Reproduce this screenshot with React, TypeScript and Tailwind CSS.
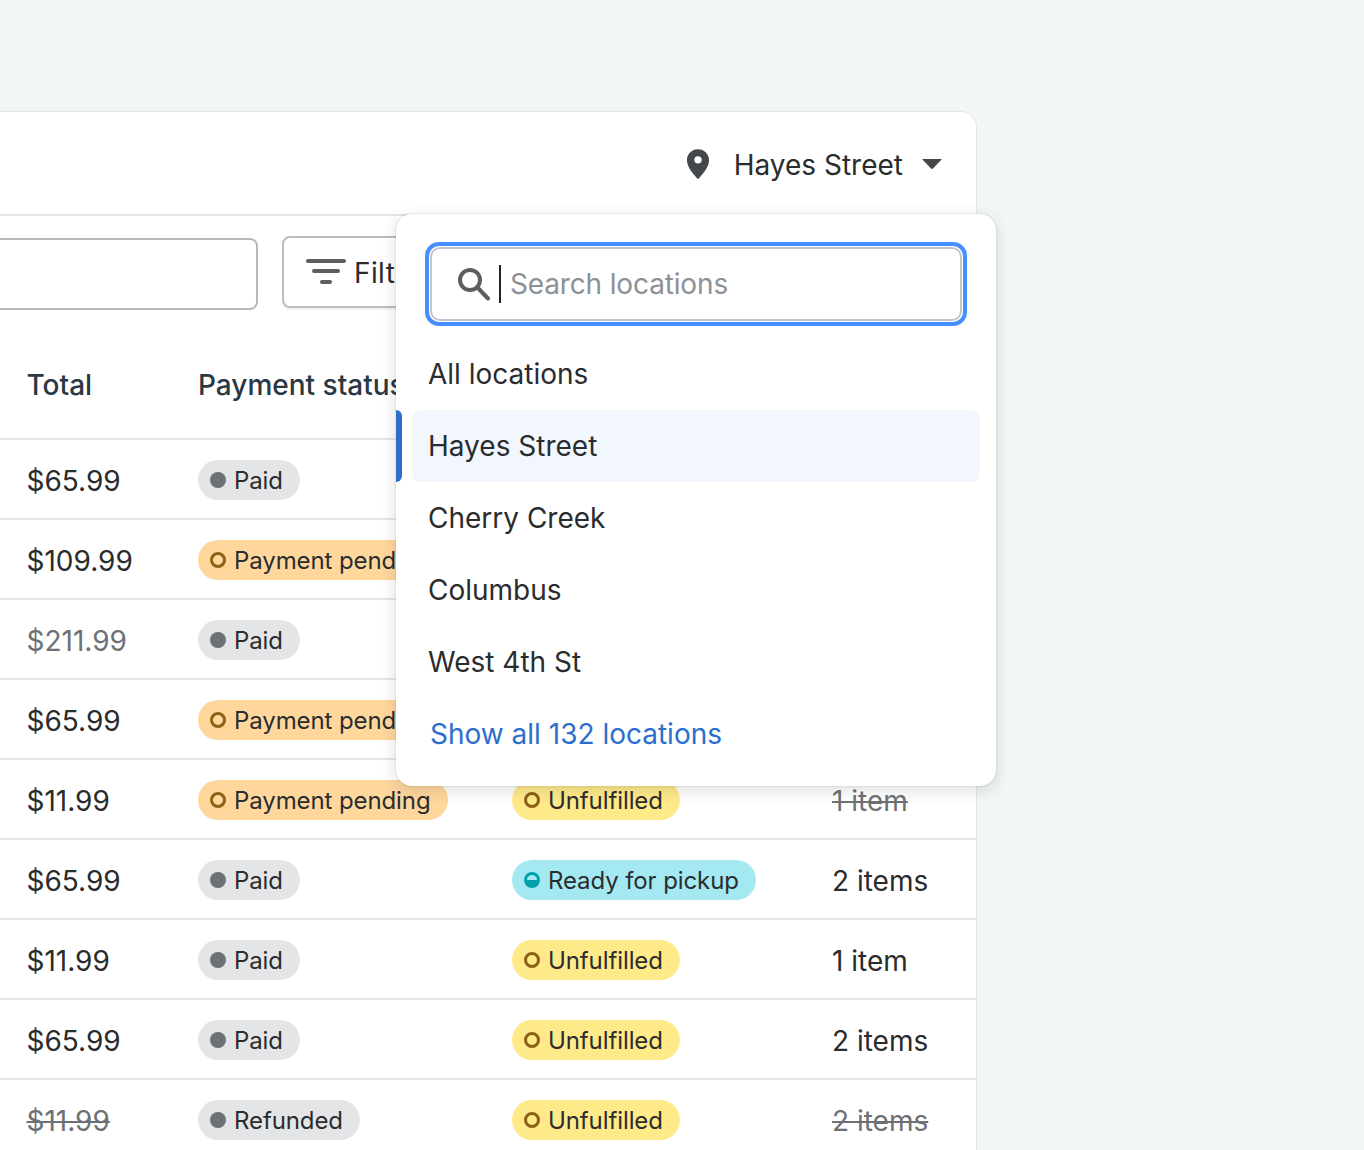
import React from "react";

type Tone = "paid" | "pending" | "unfulfilled" | "ready";

type Row = {
  total: string;
  payment: string;
  paymentTone: Tone;
  fulfillment: string;
  fulfillmentTone: Tone;
  items: string;
  muted?: "total" | "items" | "both";
};

const rows: Row[] = [
  { total: "$65.99", payment: "Paid", paymentTone: "paid", fulfillment: "Unfulfilled", fulfillmentTone: "unfulfilled", items: "2 items" },
  { total: "$109.99", payment: "Payment pending", paymentTone: "pending", fulfillment: "Unfulfilled", fulfillmentTone: "unfulfilled", items: "1 item" },
  { total: "$211.99", payment: "Paid", paymentTone: "paid", fulfillment: "Unfulfilled", fulfillmentTone: "unfulfilled", items: "2 items", muted: "total" },
  { total: "$65.99", payment: "Payment pending", paymentTone: "pending", fulfillment: "Unfulfilled", fulfillmentTone: "unfulfilled", items: "1 item" },
  { total: "$11.99", payment: "Payment pending", paymentTone: "pending", fulfillment: "Unfulfilled", fulfillmentTone: "unfulfilled", items: "1 item", muted: "items" },
  { total: "$65.99", payment: "Paid", paymentTone: "paid", fulfillment: "Ready for pickup", fulfillmentTone: "ready", items: "2 items" },
  { total: "$11.99", payment: "Paid", paymentTone: "paid", fulfillment: "Unfulfilled", fulfillmentTone: "unfulfilled", items: "1 item" },
  { total: "$65.99", payment: "Paid", paymentTone: "paid", fulfillment: "Unfulfilled", fulfillmentTone: "unfulfilled", items: "2 items" },
  { total: "$11.99", payment: "Refunded", paymentTone: "paid", fulfillment: "Unfulfilled", fulfillmentTone: "unfulfilled", items: "2 items", muted: "both" },
];

function Pill({ tone, label }: { tone: Tone; label: string }) {
  const bg =
    tone === "paid"
      ? "bg-[#e4e5e7]"
      : tone === "pending"
      ? "bg-[#ffd79d]"
      : tone === "unfulfilled"
      ? "bg-[#ffea8a]"
      : "bg-[#a4e8f2]";
  return (
    <span className={`${bg} inline-flex h-10 items-center gap-[8px] rounded-full pl-[12px] pr-[17px] text-[24px] tracking-[-0.1px] text-[#2a2c2e]`}>
      {tone === "paid" && <span className="h-4 w-4 rounded-full bg-[#6d7175]" />}
      {(tone === "pending" || tone === "unfulfilled") && (
        <span className="h-4 w-4 rounded-full border-[3px] border-[#8a6116]" />
      )}
      {tone === "ready" && (
        <span className="flex h-4 w-4 justify-center rounded-full bg-[#00a0ac] pt-[3px]">
          <span className="h-[5px] w-[10px] rounded-t-full bg-[#a4e8f2]" />
        </span>
      )}
      <span className="pt-[2px]">{label}</span>
    </span>
  );
}

function Dropdown() {
  const items = ["All locations", "Hayes Street", "Cherry Creek", "Columbus", "West 4th St"];
  return (
    <div className="absolute left-[396px] top-[214px] h-[572px] w-[600px] rounded-2xl bg-white px-4 pt-[28px] shadow-[0_0_2px_rgba(23,24,24,0.2),0_4px_16px_rgba(23,24,24,0.14)]">
      <div className="mx-[13px] flex h-[84px] items-center rounded-[14px] border-[4px] border-[#458fff] p-[1px]">
        <div className="flex h-full w-full items-center rounded-[10px] border-2 border-[#c4c7cb] pl-[25px]">
          <svg width="34" height="34" viewBox="0 0 34 34" fill="none" className="mr-[8px] shrink-0">
            <circle cx="13" cy="13" r="10" stroke="#5c5f62" strokeWidth="4" />
            <path d="M20.5 20.5L31 31.5" stroke="#5c5f62" strokeWidth="4" strokeLinecap="round" />
          </svg>
          <span className="h-[38px] w-[2px] bg-[#202223]" />
          <span className="ml-[9px] text-[28px] tracking-[-0.15px] text-[#8c9196]">Search locations</span>
        </div>
      </div>
      <div className="mt-[12px] flex flex-col">
        {items.map((name) => {
          const selected = name === "Hayes Street";
          return (
            <div
              key={name}
              className={`${selected ? "bg-[#f2f7fe]" : ""} relative flex h-[72px] items-center rounded-lg px-[16px] text-[28px] text-[#2a2c2e]`}
            >
              {selected && (
                <span className="absolute -left-4 top-0 h-[72px] w-[6px] rounded-r-[6px] bg-[#2c6ecb]" />
              )}
              {name}
            </div>
          );
        })}
        <div className="flex h-[72px] items-center px-[18px] text-[28px] text-[#2c6ecb]">Show all 132 locations</div>
      </div>
    </div>
  );
}

export default function App() {
  return (
    <div
      className="relative h-[1150px] overflow-hidden bg-[#f1f7f5] pt-[111px]"
      style={{ fontFamily: "Inter, 'Liberation Sans', sans-serif" }}
    >
      <div className="w-[977px] rounded-tr-2xl border-r border-t border-[#e3e6e8] bg-white">
        <div className="flex h-[104px] items-center justify-end border-b-2 border-[#e4e5e7] pr-[34px] pt-[2px]">
          <svg width="24" height="32" viewBox="0 0 26 34" className="mr-[24px]">
            <path
              fillRule="evenodd"
              fill="#45484b"
              d="M13 1C6 1 1 6.4 1 13c0 7.6 7.4 15.2 10.8 19.4.6.8 1.8.8 2.4 0C17.6 28.2 25 20.6 25 13 25 6.4 20 1 13 1zm0 15.5a4 4 0 1 1 0-8 4 4 0 0 1 0 8z"
            />
          </svg>
          <span className="pt-[2px] text-[28px] text-[#2a2c2e]">Hayes Street</span>
          <svg width="20" height="10" viewBox="0 0 20 10" className="ml-[19px]">
            <path d="M0 0h20l-9 9.5a1.4 1.4 0 0 1-2 0z" fill="#45484b" />
          </svg>
        </div>
        <div className="flex items-start gap-[24px] pt-[20px]">
          <div className="mt-[2px] h-[72px] w-[258px] rounded-r-lg border-2 border-l-0 border-[#b5babe]" />
          <div className="flex h-[72px] w-[200px] items-center rounded-lg border-2 border-[#b9bec2] pl-[22px] shadow-[0_2px_0_rgba(0,0,0,0.05)]">
            <svg width="40" height="26" viewBox="0 0 40 26" className="mr-[8px]">
              <rect x="0" y="0" width="40" height="4" rx="2" fill="#5c5f62" />
              <rect x="6" y="10" width="28" height="4" rx="2" fill="#5c5f62" />
              <rect x="14" y="21" width="12" height="4" rx="2" fill="#5c5f62" />
            </svg>
            <span className="pt-[2px] text-[28px] tracking-[0.4px] text-[#2a2c2e]">Filter</span>
          </div>
        </div>
        <div className="mt-[22px] grid h-[108px] grid-cols-[171.5px_314px_320px_1fr] items-center border-b-2 border-[#e4e5e7] pl-[26.5px] text-[28px] font-medium text-[#2b3844]">
          <span>Total</span>
          <span>Payment status</span>
          <span>Fulfillment</span>
          <span>Items</span>
        </div>
        {rows.map((row, i) => (
          <div
            key={i}
            className="grid h-20 grid-cols-[171.5px_314px_320px_1fr] items-center border-b-2 border-[#e4e5e7] pl-[26.5px] pt-[2px] text-[28px] text-[#2a2c2e]"
          >
            <span
              className={`pt-[2px] ${
                row.muted === "both"
                  ? "text-[#6d7175] line-through"
                  : row.muted === "total"
                  ? "text-[#6d7175]"
                  : ""
              }`}
            >
              {row.total}
            </span>
            <span className="flex"><Pill tone={row.paymentTone} label={row.payment} /></span>
            <span className="flex"><Pill tone={row.fulfillmentTone} label={row.fulfillment} /></span>
            <span className={`pt-[2px] ${row.muted === "items" || row.muted === "both" ? "text-[#6d7175] line-through" : ""}`}>
              {row.items}
            </span>
          </div>
        ))}
      </div>
      <Dropdown />
    </div>
  );
}
